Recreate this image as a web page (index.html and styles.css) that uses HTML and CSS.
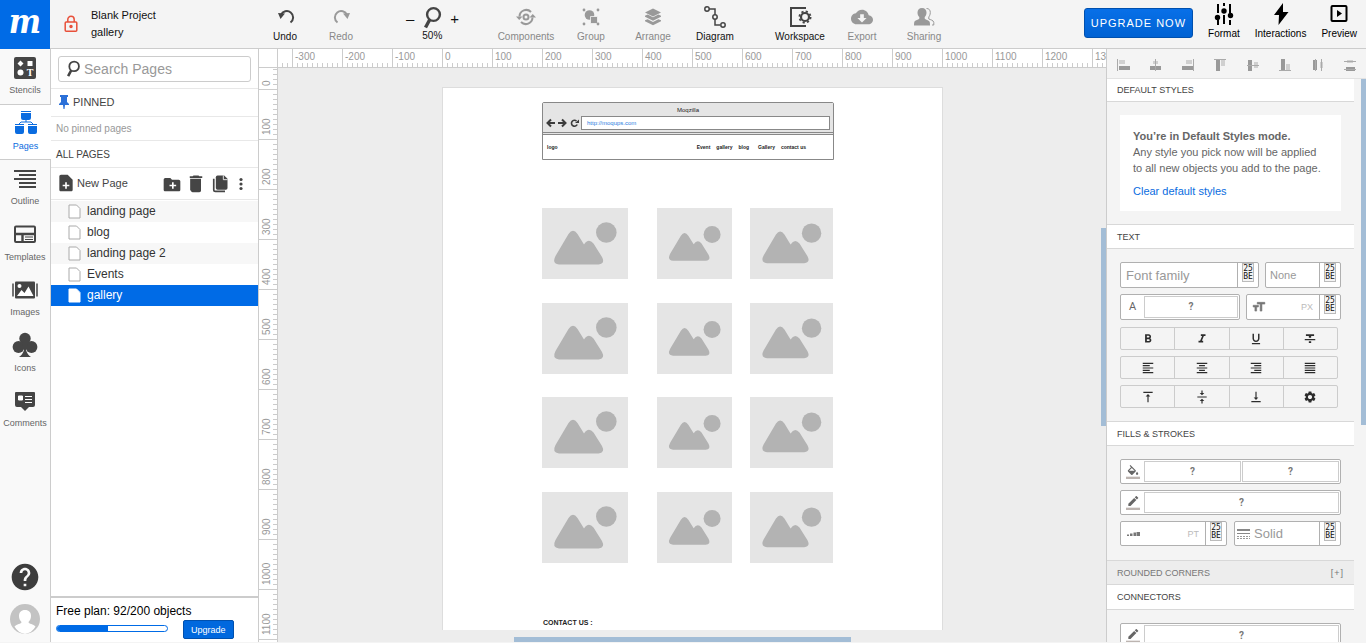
FILE: index.html
```html
<!DOCTYPE html>
<html lang="en">
<head>
<meta charset="utf-8">
<title>Blank Project - gallery</title>
<link rel="stylesheet" href="styles.css">
</head>
<body>
<svg class="defs" width="0" height="0" aria-hidden="true">
  <symbol id="picture" viewBox="0 0 86 71">
    <path d="M17 56.500Q9.500 55.500 13.500 48L26.500 26Q31 19.500 35.500 26L42 36.500Q46.500 29.500 51.500 35.500L60 49Q63.500 55.500 56.500 56.500Z"/>
    <circle cx="64.300" cy="24.500" r="10.300"/>
  </symbol>
  <symbol id="sheet" viewBox="0 0 13 15"><path d="M1 1h7.500l3.500 3.500v9.500H1z"/></symbol>
  <symbol id="lens" viewBox="0 0 20 24"><g fill="none" stroke="currentColor"><circle cx="11.500" cy="8.500" r="6.400" stroke-width="2.400"/><path d="M7.800 13.500L3.500 21.500" stroke-width="3.400"/></g></symbol>
  <symbol id="pencil" viewBox="0 0 24 24"><path d="M17.750 7L14 3.250l-10 10V17h3.750l10-10zm2.960-2.960c.39-.39.39-1.020 0-1.410L18.370.29c-.39-.39-1.020-.39-1.410 0L15 2.250 18.750 6l1.960-1.960z"/><path d="M0 20h24v4H0z" fill="#bcb4b0"/></symbol>
</svg>

<header class="topbar">
  <a class="logo" href="#" aria-label="Home">m</a>
  <div class="project">
    <svg width="14" height="18" viewBox="0 0 14 18" fill="none" stroke="#e8503a" stroke-width="1.500"><rect x="1.200" y="7" width="11.600" height="9.200" rx="1"/><path d="M3.800 7V4.500A3.200 3.200 0 0 1 10.200 4.500V7"/><circle cx="7" cy="11.600" r="1" fill="#e8503a"/></svg>
    <div class="names"><span>Blank Project</span><span>gallery</span></div>
  </div>
  <div class="tools history">
    <button class="tool"><svg width="20" height="20" viewBox="0 0 20 20"><path d="M6 8A6.300 6.300 0 1 1 15.500 15.500" fill="none" stroke="currentColor" stroke-width="2"/><path d="M3 6l7 .5-4.500 5.500z" fill="currentColor"/></svg>Undo</button>
    <button class="tool off"><svg width="20" height="20" viewBox="0 0 20 20"><path d="M16 8A6.300 6.300 0 1 0 6.500 15.500" fill="none" stroke="currentColor" stroke-width="2"/><path d="M19 6l-7 .5 4.500 5.500z" fill="currentColor"/></svg>Redo</button>
  </div>
  <div class="zoom">
    <button aria-label="Zoom out">–</button>
    <button class="level"><svg width="20" height="24"><use href="#lens"/></svg>50%</button>
    <button aria-label="Zoom in">+</button>
  </div>
  <div class="tools">
    <button class="tool off wide"><svg width="20" height="20" viewBox="0 0 20 20"><g fill="none" stroke="currentColor" stroke-width="2"><path d="M3.500 9.500A6.700 6.700 0 0 1 15 5M16.500 10.500A6.700 6.700 0 0 1 5 15"/><circle cx="10" cy="10" r="2.500"/></g><path d="M0 9.500h6.500L3.200 13zM20 10.500h-6.500L16.800 7z" fill="currentColor"/></svg>Components</button>
    <button class="tool off"><svg width="20" height="20" viewBox="0 0 20 20" fill="currentColor"><circle cx="8.500" cy="8" r="4.800"/><path d="M9.500 9.500h7v7h-7z" stroke="#f4f4f4" stroke-width=".8"/><circle cx="3" cy="3" r="1.400"/><circle cx="17" cy="3" r="1.400"/><circle cx="3" cy="17" r="1.400"/><circle cx="17" cy="17" r="1.400"/></svg>Group</button>
    <button class="tool off"><svg width="20" height="20" viewBox="0 0 20 20" fill="currentColor"><path d="M10 1.500l8 4-8 4-8-4zM2 8.800l2.600-1.300L10 10.200l5.400-2.700L18 8.800v1l-8 4-8-4zM2 13.300l2.600-1.100L10 14.900l5.400-2.700 2.600 1.100v1l-8 4-8-4z"/></svg>Arrange</button>
    <button class="tool"><svg width="24" height="24" viewBox="0 0 24 24" fill="#f4f4f4" stroke="currentColor" stroke-width="1.500"><path d="M6 4h6v16h5" fill="none"/><circle cx="4" cy="4" r="2.200"/><circle cx="12" cy="12" r="2.200"/><circle cx="20" cy="20" r="2.200"/></svg>Diagram</button>
  </div>
  <div class="tools workspace">
    <button class="tool"><svg width="24" height="22" viewBox="0 0 24 22" fill="none" stroke="currentColor"><path d="M18 2H3v18h15" stroke-width="2"/><circle cx="17" cy="11" r="4" stroke-width="2.200"/><circle cx="17" cy="11" r="5.600" stroke-width="1.800" stroke-dasharray="2.200 2.198"/></svg>Workspace</button>
    <button class="tool off"><svg width="22" height="20" viewBox="0 2 24 20" fill="currentColor"><path d="M19.350 10.040C18.670 6.590 15.640 4 12 4 9.110 4 6.600 5.640 5.350 8.040 2.340 8.360 0 10.910 0 14c0 3.310 2.690 6 6 6h13c2.760 0 5-2.240 5-5 0-2.640-2.050-4.780-4.650-4.960zM17 13l-5 5-5-5h3V9h4v4h3z"/></svg>Export</button>
    <button class="tool off"><svg width="22" height="20" viewBox="0 0 22 20"><path d="M9 1c2.800 0 4.500 1.800 4.500 4.500 0 2-.8 3.500-1.800 4.500v1.500c0 1 4.300 1.500 5 3.500.3 1 .3 3 .3 3.500H1c0-.5 0-2.500.3-3.500.700-2 5-2.500 5-3.500V10c-1-1-1.800-2.500-1.800-4.500C4.500 2.800 6.200 1 9 1z" fill="currentColor"/><path d="M13.500 1.500c2.500 0 3.800 1.500 3.800 4s-1 3.500-1.500 4.500V12c1.500.8 4.700 1 5 3.500V18H19" fill="none" stroke="currentColor"/></svg>Sharing</button>
  </div>
  <div class="actions">
    <button class="upgrade-now">UPGRADE NOW</button>
    <button class="action"><svg width="20" height="22" viewBox="0 0 20 22"><path d="M4 1v9M4 17v5M10 0v3M10 12v9M16 1v9M16 17v5" stroke="#000" stroke-width="2" stroke-dasharray="9 2"/><circle cx="3.500" cy="14.500" r="2.700"/><circle cx="10" cy="8" r="2.700"/><circle cx="16.500" cy="12.500" r="2.700"/></svg>Format</button>
    <button class="action"><svg width="20" height="22" viewBox="0 0 20 22"><path d="M12 0L3 12h5L7.500 22 17.500 9H12z"/></svg>Interactions</button>
    <button class="action"><svg width="20" height="22" viewBox="0 0 20 22"><rect x="2.500" y="3" width="15" height="15" rx="1" fill="none" stroke="#000" stroke-width="2"/><path d="M8 7l5 3.500L8 14z"/></svg>Preview</button>
  </div>
</header>

<main class="work">
  <nav class="rail">
    <a class="tab" href="#"><svg width="22" height="22" viewBox="0 0 22 22"><rect width="22" height="22" rx="2" fill="#454545"/><path d="M6.500 3.500L9.500 6.500 6.500 9.500 3.500 6.500zM13.500 4h5v5h-5z" fill="#fff"/><circle cx="6.500" cy="15.500" r="3" fill="#fff"/><text x="16" y="19" text-anchor="middle" fill="#fff" font-family="Liberation Serif" font-weight="bold" font-size="10">T</text></svg>Stencils</a>
    <a class="tab current" href="#"><svg width="24" height="26" viewBox="0 0 24 26" fill="currentColor"><path d="M7 1h10v1H7zM7 3h10v5q0 2-2 2H9q-2 0-2-2zM1 14h9v1H1zM1 16h9v6q0 2-2 2H3q-2 0-2-2zM14 14h9v1h-9zM14 16h9v6q0 2-2 2h-5q-2 0-2-2z"/><path d="M12 10v2M5 14l2-2h10l2 2" fill="none" stroke="currentColor"/></svg>Pages</a>
    <a class="tab" href="#"><svg width="22" height="22" viewBox="0 0 22 22"><path d="M0 3h22M5 7h17M0 11h22M5 15h17M5 19h17" stroke="#454545" stroke-width="2"/></svg>Outline</a>
    <a class="tab" href="#"><svg width="22" height="22" viewBox="0 0 22 22"><rect x="1" y="3.500" width="20" height="15.500" rx="1" fill="none" stroke="#454545" stroke-width="2"/><path d="M1 11h20M8.500 11v8" stroke="#454545" stroke-width="2.400"/><path d="M11 14h8M11 16.500h8" stroke="#454545"/></svg>Templates</a>
    <a class="tab" href="#"><svg width="26" height="22" viewBox="0 0 26 22"><path d="M1 4.500v13M25 4.500v13" stroke="#454545" stroke-width="1.500"/><rect x="3" y="2.500" width="20" height="17" rx="1" fill="#454545"/><path d="M5 17l4.500-6 3 3 4-6.500 5 9.500z" fill="#fff"/><circle cx="7.500" cy="7" r="2" fill="#fff"/></svg>Images</a>
    <a class="tab" href="#"><svg width="26" height="26" viewBox="0 0 26 26" fill="#454545"><circle cx="13" cy="6.500" r="5.700"/><circle cx="6.500" cy="15" r="5.900"/><circle cx="19.500" cy="15" r="5.900"/><path d="M11 10h4l1 5-2 3q1.500 5 5 7H7q3.500-2 5-7l-2-3z"/></svg>Icons</a>
    <a class="tab" href="#"><svg width="22" height="22" viewBox="0 0 22 22"><path d="M2 2h18q1 0 1 1v12q0 2-2 2h-4l-4 4-4-4H3q-2 0-2-2V3q0-1 1-1z" fill="#454545"/><path d="M4.500 6h4v4h-4zM11 6.500h7M11 9.500h7M11 12.500h7" fill="#fff" stroke="#fff"/></svg>Comments</a>
    <div class="account">
      <button aria-label="Help"><svg width="32" height="32" viewBox="0 0 24 24" fill="#3d3d3d"><path d="M12 2C6.480 2 2 6.480 2 12s4.480 10 10 10 10-4.480 10-10S17.520 2 12 2zm1 17h-2v-2h2v2zm2.070-7.750l-.9.920C13.450 12.900 13 13.500 13 15h-2v-.5c0-1.100.45-2.100 1.170-2.830l1.240-1.260c.37-.36.59-.86.59-1.410 0-1.100-.9-2-2-2s-2 .9-2 2H8c0-2.210 1.790-4 4-4s4 1.790 4 4c0 .88-.36 1.680-.93 2.250z"/></svg></button>
      <button aria-label="Account"><svg width="30" height="30" viewBox="0 0 30 30"><circle cx="15" cy="15" r="15" fill="#c3c3c3"/><path d="M15 6c4 0 6 2.500 6 6 0 2.500-1 4.500-2.500 6 0 2 5 2 7 4.500A14.500 14.500 0 0 1 15 30 14.500 14.500 0 0 1 4.500 22.500C6.500 20 11.500 20 11.500 18 10 16.500 9 14.500 9 12c0-3.500 2-6 6-6z" fill="#fff"/></svg></button>
    </div>
  </nav>

  <aside class="pages">
    <label class="search"><svg width="16" height="18"><use href="#lens"/></svg><input type="text" placeholder="Search Pages" aria-label="Search Pages"></label>
    <h2 class="row pinned"><svg width="10" height="14" viewBox="0 0 10 14" fill="#2b70d8"><path d="M1 0h8v2H8v5l2 2v1H6L5.500 14h-1L4 10H0V9l2-2V2H1z"/></svg>PINNED</h2>
    <p class="row none">No pinned pages</p>
    <h2 class="row all">ALL PAGES</h2>
    <div class="row new">
      <button class="add"><svg width="20" height="20" viewBox="0 0 24 24"><path d="M14 2H6c-1.100 0-1.990.9-1.990 2L4 20c0 1.100.89 2 1.990 2H18c1.100 0 2-.9 2-2V8l-6-6zm2 14h-3v3h-2v-3H8v-2h3v-3h2v3h3v2z"/></svg>New Page</button>
      <button aria-label="New folder"><svg width="20" height="20" viewBox="0 0 24 24"><path d="M20 8h-8l-2-2H4c-1.110 0-2 .89-2 2v12c0 1.110.89 2 2 2h16c1.110 0 2-.89 2-2V10c0-1.110-.89-2-2-2zm-3 8h-3v3h-2v-3H9v-2h3v-3h2v3h3v2z"/></svg></button>
      <button aria-label="Delete"><svg width="20" height="20" viewBox="0 0 24 24"><path d="M6 21c0 1.100.9 2 2 2h8c1.100 0 2-.9 2-2V7H5v14zM19.500 4H16l-1-1H9L8 4H4.500v2h15z"/></svg></button>
      <button aria-label="Duplicate"><svg width="20" height="20" viewBox="0 0 24 24"><path d="M9 3h8l4 4v11q0 2-2 2H9q-2 0-2-2V5q0-2 2-2z"/><path d="M4.500 7v13q0 2 2 2H18" fill="none" stroke="#454545" stroke-width="2"/><path d="M16 3v5h5" fill="none" stroke="#fff"/></svg></button>
      <button class="more" aria-label="More"><svg width="10" height="20" viewBox="0 0 10 20"><circle cx="5" cy="6.500" r="1.600"/><circle cx="5" cy="11" r="1.600"/><circle cx="5" cy="15.500" r="1.600"/></svg></button>
    </div>
    <ul class="list">
      <li><a href="#"><svg width="13" height="15"><use href="#sheet"/></svg>landing page</a></li>
      <li><a href="#"><svg width="13" height="15"><use href="#sheet"/></svg>blog</a></li>
      <li><a href="#"><svg width="13" height="15"><use href="#sheet"/></svg>landing page 2</a></li>
      <li><a href="#"><svg width="13" height="15"><use href="#sheet"/></svg>Events</a></li>
      <li class="selected"><a href="#"><svg width="13" height="15"><use href="#sheet"/></svg>gallery</a></li>
    </ul>
    <footer class="plan">
      <span>Free plan: 92/200 objects</span>
      <div class="quota"><div class="bar"><div class="used" style="width:46%"></div></div><button class="upgrade">Upgrade</button></div>
    </footer>
  </aside>

  <section class="editor">
    <div class="corner"></div>
    <div class="ruler-h"><span>-300</span><span>-200</span><span>-100</span><span>0</span><span>100</span><span>200</span><span>300</span><span>400</span><span>500</span><span>600</span><span>700</span><span>800</span><span>900</span><span>1000</span><span>1100</span><span>1200</span><span>1300</span></div>
    <div class="ruler-v"><span>0</span><span>100</span><span>200</span><span>300</span><span>400</span><span>500</span><span>600</span><span>700</span><span>800</span><span>900</span><span>1000</span><span>1100</span></div>
    <div class="viewport">
      <div class="stage">
        <div class="page">
          <div class="browser">
            <div class="chrome">
              <div class="title">Moqzilla</div>
              <div class="address">
                <svg width="34" height="10" viewBox="0 0 34 10" fill="none" stroke="#3c3c3c" stroke-width="2"><path d="M9 5H2M5 1.500L1.500 5 5 8.500M12 5h7M16 1.500L19.500 5 16 8.500"/><path d="M31.200 6.500A3 3 0 1 1 30.500 3" stroke-width="1.600"/><path d="M29 5h4V1.500z" fill="#3c3c3c" stroke="none"/></svg>
                <span class="url">http://moqups.com</span>
              </div>
            </div>
            <div class="site"><b class="brand">logo</b><b>Event</b><b>gallery</b><b>blog</b><b class="far">Gallery</b><b>contact us</b></div>
          </div>
          <div class="gallery">
            <div class="tile"><svg><use href="#picture"/></svg></div><div class="tile small"><svg><use href="#picture"/></svg></div><div class="tile medium"><svg><use href="#picture"/></svg></div>
            <div class="tile"><svg><use href="#picture"/></svg></div><div class="tile small"><svg><use href="#picture"/></svg></div><div class="tile medium"><svg><use href="#picture"/></svg></div>
            <div class="tile"><svg><use href="#picture"/></svg></div><div class="tile small"><svg><use href="#picture"/></svg></div><div class="tile medium"><svg><use href="#picture"/></svg></div>
            <div class="tile"><svg><use href="#picture"/></svg></div><div class="tile small"><svg><use href="#picture"/></svg></div><div class="tile medium"><svg><use href="#picture"/></svg></div>
          </div>
          <div class="contact">CONTACT US :</div>
        </div>
      </div>
      <div class="scroll-v"></div>
      <div class="scroll-h"></div>
    </div>
  </section>

  <aside class="format">
    <div class="align">
      <button aria-label="Align left"><svg viewBox="0 0 14 14"><path class="lt" d="M3 2h6v4H3z"/><path d="M3 8h11v4H3z"/><path d="M1.500 1v12" stroke="#aaa"/></svg></button>
      <button aria-label="Align centre"><svg viewBox="0 0 14 14"><path class="lt" d="M5 3h5v3H5z"/><path d="M2 8h11v4H2z"/><path d="M7.500 1v12" stroke="#aaa"/></svg></button>
      <button aria-label="Align right"><svg viewBox="0 0 14 14"><path class="lt" d="M5 2h6v4H5z"/><path d="M1 8h11v4H1z"/><path d="M12.500 1v12" stroke="#aaa"/></svg></button>
      <button aria-label="Align top"><svg viewBox="0 0 14 14"><path class="lt" d="M8 2h4v6H8z"/><path d="M3 2h4v11H3z"/><path d="M1 1.500h12" stroke="#aaa"/></svg></button>
      <button aria-label="Align middle"><svg viewBox="0 0 14 14"><path class="lt" d="M8 4h4v6H8z"/><path d="M2 2h4v11H2z"/><path d="M1 7.500h12" stroke="#aaa"/></svg></button>
      <button aria-label="Align bottom"><svg viewBox="0 0 14 14"><path class="lt" d="M8 6h4v6H8z"/><path d="M3 1h4v11H3z"/><path d="M1 12.500h12" stroke="#aaa"/></svg></button>
      <button aria-label="Distribute horizontally"><svg viewBox="0 0 14 14"><path class="lt" d="M9 4h3v6H9z"/><path d="M2 2h4v10H2z"/><path d="M4.500 1v12M10.500 1v12" stroke="#aaa"/></svg></button>
      <button aria-label="Distribute vertically"><svg viewBox="0 0 14 14"><path class="lt" d="M4 2h6v3H4z"/><path d="M3 9h9v4H3z"/><path d="M1 3.500h12M1 11.500h12" stroke="#aaa"/></svg></button>
    </div>
    <div class="scroller">
      <div class="sections">
        <h3 class="first">DEFAULT STYLES</h3>
        <div class="block">
          <div class="card"><p><b>You’re in Default Styles mode.</b><br>Any style you pick now will be applied<br>to all new objects you add to the page.</p><a href="#">Clear default styles</a></div>
        </div>
        <h3 class="text">TEXT</h3>
        <div class="block fields type">
          <div class="line">
            <div class="field grow"><input type="text" placeholder="Font family" aria-label="Font family"><button class="drop" aria-label="Fonts"><i>25<br>BE</i></button></div>
            <div class="field weight"><input class="sm" type="text" placeholder="None" aria-label="Font weight"><button class="drop" aria-label="Weights"><i>25<br>BE</i></button></div>
          </div>
          <div class="line">
            <div class="field color"><span class="ico letter">A</span><button class="swatch">?</button></div>
            <div class="field grow"><span class="ico"><svg width="14" height="14" viewBox="0 0 24 24" fill="#777"><path d="M9 4v3h5v12h3V7h5V4H9zm-7 8h3v7h3v-7h3V9H2v3z" stroke="#777"/></svg></span><input class="unit" type="text" placeholder="PX" aria-label="Font size"><button class="drop" aria-label="Sizes"><i>25<br>BE</i></button></div>
          </div>
          <div class="segs">
          <div class="seg">
            <button aria-label="Bold"><svg viewBox="0 0 24 24"><path d="M15.600 10.790c.97-.67 1.650-1.770 1.650-2.790 0-2.260-1.750-4-4-4H7v14h7.040c2.090 0 3.710-1.700 3.710-3.790 0-1.520-.86-2.820-2.150-3.420zM10 6.500h3c.83 0 1.500.67 1.500 1.500s-.67 1.500-1.500 1.500h-3v-3zm3.500 9H10v-3h3.500c.83 0 1.500.67 1.500 1.500s-.67 1.500-1.500 1.500z"/></svg></button>
            <button aria-label="Italic"><svg viewBox="0 0 24 24"><path d="M10 4v3h2.210l-3.420 8H6v3h8v-3h-2.210l3.420-8H18V4z"/></svg></button>
            <button aria-label="Underline"><svg viewBox="0 0 24 24"><path d="M12 17c3.310 0 6-2.690 6-6V3h-2.500v8c0 1.930-1.570 3.500-3.500 3.500S8.500 12.930 8.500 11V3H6v8c0 3.310 2.690 6 6 6zm-7 2v2h14v-2H5z"/></svg></button>
            <button aria-label="Strikethrough"><svg viewBox="0 0 24 24"><path d="M10 19h4v-3h-4v3zM5 4v3h5v3h4V7h5V4H5zM3 14h18v-2H3v2z"/></svg></button>
          </div>
          <div class="seg">
            <button aria-label="Text left"><svg viewBox="0 0 24 24"><path d="M3 3h18v2H3zM3 7h12v2H3zM3 11h18v2H3zM3 15h12v2H3zM3 19h18v2H3z"/></svg></button>
            <button aria-label="Text centre"><svg viewBox="0 0 24 24"><path d="M3 3h18v2H3zM7 7h10v2H7zM3 11h18v2H3zM7 15h10v2H7zM3 19h18v2H3z"/></svg></button>
            <button aria-label="Text right"><svg viewBox="0 0 24 24"><path d="M3 3h18v2H3zM9 7h12v2H9zM3 11h18v2H3zM9 15h12v2H9zM3 19h18v2H3z"/></svg></button>
            <button aria-label="Justify"><svg viewBox="0 0 24 24"><path d="M3 3h18v2H3zM3 7h18v2H3zM3 11h18v2H3zM3 15h18v2H3zM3 19h18v2H3z"/></svg></button>
          </div>
          <div class="seg">
            <button aria-label="Top"><svg viewBox="0 0 24 24"><path d="M8 11h3v10h2V11h3l-4-4-4 4zM4 3v2h16V3H4z"/></svg></button>
            <button aria-label="Middle"><svg viewBox="0 0 24 24"><path d="M8 19h3v4h2v-4h3l-4-4-4 4zm8-14h-3V1h-2v4H8l4 4 4-4zM4 11v2h16v-2H4z"/></svg></button>
            <button aria-label="Bottom"><svg viewBox="0 0 24 24"><path d="M16 13h-3V3h-2v10H8l4 4 4-4zM4 19v2h16v-2H4z"/></svg></button>
            <button aria-label="Text settings"><svg viewBox="0 0 24 24"><path d="M19.140 12.940c.04-.3.06-.61.06-.94 0-.32-.02-.64-.07-.94l2.030-1.580c.18-.14.23-.41.12-.61l-1.920-3.320c-.12-.22-.37-.29-.59-.22l-2.390.96c-.5-.38-1.030-.7-1.620-.94l-.36-2.540c-.04-.24-.24-.41-.48-.41h-3.840c-.24 0-.43.17-.47.41l-.36 2.540c-.59.24-1.130.57-1.620.94l-2.390-.96c-.22-.08-.47 0-.59.22L2.740 8.870c-.12.21-.08.47.12.61l2.030 1.580c-.05.3-.09.63-.09.94s.02.64.07.94l-2.030 1.580c-.18.14-.23.41-.12.61l1.920 3.320c.12.22.37.29.59.22l2.390-.96c.5.38 1.030.7 1.620.94l.36 2.540c.05.24.24.41.48.41h3.840c.24 0 .44-.17.47-.41l.36-2.540c.59-.24 1.130-.56 1.620-.94l2.390.96c.22.08.47 0 .59-.22l1.920-3.320c.12-.22.07-.47-.12-.61l-2.010-1.580zM12 15.600c-1.980 0-3.600-1.620-3.600-3.600s1.620-3.600 3.600-3.600 3.600 1.620 3.600 3.600-1.620 3.600-3.600 3.600z"/></svg></button>
          </div>
          </div>
        </div>
        <h3 class="text">FILLS &amp; STROKES</h3>
        <div class="block fields paint">
          <div class="field"><span class="ico"><svg width="14" height="14" viewBox="0 0 24 24" fill="#666"><path d="M16.560 8.940L7.620 0 6.210 1.410l2.380 2.380-5.150 5.150c-.59.59-.59 1.540 0 2.120l5.500 5.500c.29.29.68.44 1.060.44s.77-.15 1.060-.44l5.500-5.500c.59-.58.59-1.530 0-2.120zM5.210 10L10 5.210 14.790 10H5.210zM19 11.500s-2 2.170-2 3.500c0 1.100.9 2 2 2s2-.9 2-2c0-1.330-2-3.500-2-3.500z"/><path d="M0 20h24v4H0z" fill="#bcb4b0"/></svg></span><button class="swatch">?</button><button class="swatch">?</button></div>
          <div class="field"><span class="ico"><svg width="14" height="14" fill="#666"><use href="#pencil"/></svg></span><button class="swatch">?</button></div>
          <div class="line">
            <div class="field half"><span class="ico"><svg width="14" height="6" viewBox="0 0 14 6" fill="#777"><path d="M1 3.500h2v1.500H1zM4 2.500h2.500V5H4zM7.500 1.500H10V5H7.500zM10.500 1H14v4h-3.500z"/></svg></span><input class="unit" type="text" placeholder="PT" aria-label="Stroke width"><button class="drop" aria-label="Widths"><i>25<br>BE</i></button></div>
            <div class="field half"><span class="ico tight"><svg width="13" height="10" viewBox="0 0 13 10" fill="#888"><path d="M0 0h13v2H0zM0 4h13v1H0z"/><path d="M0 7.500h13M0 9.500h13" stroke="#999" stroke-dasharray="2 1"/></svg></span><input type="text" placeholder="Solid" aria-label="Stroke style"><button class="drop" aria-label="Styles"><i>25<br>BE</i></button></div>
          </div>
        </div>
        <h3 class="text closed">ROUNDED CORNERS<span>[+]</span></h3>
        <h3>CONNECTORS</h3>
        <div class="block fields paint">
          <div class="field"><span class="ico"><svg width="14" height="14" fill="#666"><use href="#pencil"/></svg></span><button class="swatch">?</button></div>
        </div>
      </div>
      <div class="scroll-f"></div>
    </div>
  </aside>
</main>
</body>
</html>
```
FILE: styles.css
```css
* { box-sizing: border-box; }
body {
  margin: 0;
  height: 100vh;
  padding-bottom: 1px;
  display: flex;
  flex-direction: column;
  overflow: hidden;
  background: #f4f4f4;
  font-family: "Liberation Sans", Arial, sans-serif;
  font-size: 11px;
  color: #333;
}
button { border: 0; padding: 0; background: none; font: inherit; color: inherit; }
input { border: 0; padding: 0; background: none; font: inherit; color: inherit; outline: 0; min-width: 0; }
h2, h3, p, ul { margin: 0; padding: 0; font-weight: normal; list-style: none; }
a { color: inherit; text-decoration: none; }
svg { display: block; flex: none; }
.defs { position: absolute; }

/* Top bar */
.topbar { display: flex; flex: none; height: 49px; border-bottom: 1px solid #ccc; background: #f4f4f4; color: #111; }
.logo {
  width: 50px; height: 49px; flex: none; background: #006be6; color: #fff; text-align: center;
  font: italic bold 34px/43px "DejaVu Serif Condensed", "DejaVu Serif", serif;
}
.project { display: flex; align-items: center; gap: 13px; width: 207px; padding-left: 14px; }
.names { display: flex; flex-direction: column; line-height: 17px; }
.tools { display: flex; }
.workspace { margin-left: 23px; }
.tool { display: flex; flex-direction: column; justify-content: flex-end; align-items: center; width: 62px; height: 43px; padding-top: 3px; font-size: 10px; line-height: 13px; color: #111; }
.tool svg { margin: auto; color: #444; }
.history .tool { width: 56px; }
.tool.wide { width: 68px; }
.tool.off { color: #888; }
.tool.off svg { color: #999; }
.zoom { display: flex; align-items: center; justify-content: center; gap: 4px; width: 123px; padding: 0 0 12px 4px; font-size: 15px; }
.level { display: flex; flex-direction: column; align-items: center; width: 28px; padding-top: 12px; font-size: 10px; line-height: 12px; }
.level svg, .search svg { color: #444; }
.actions { display: flex; align-items: flex-start; gap: 15px; margin-left: auto; padding-right: 9px; }
.action { display: flex; flex-direction: column; align-items: center; gap: 2px; padding-top: 3px; font-size: 10px; line-height: 13px; color: #000; }
.upgrade-now { height: 30px; margin-top: 8px; padding: 0 6px; border: 1px solid #0050ae; border-radius: 3px; background: linear-gradient(#0870e8, #0062d3); color: #fff; letter-spacing: 1px; }

.work { display: flex; flex: 1; min-height: 0; }

/* Left rail */
.rail { display: flex; flex-direction: column; flex: none; width: 51px; border-right: 1px solid #ccc; background: #f9f9f9; }
.tab { display: flex; flex-direction: column; align-items: center; height: 55px; padding: 2px 0 8px; font-size: 9px; line-height: 12px; color: #666; }
.tab:nth-child(even) { height: 56px; }
.tab svg { margin: auto; }
.tab.current { margin-right: -1px; background: #fff; color: #0a6ce0; box-shadow: 0 1px #ccc inset, 0 -1px #ccc inset; }
.account { display: flex; flex-direction: column; align-items: center; gap: 11px; margin-top: auto; padding-bottom: 8px; }

/* Pages panel */
.pages { display: flex; flex-direction: column; flex: none; width: 208px; border-right: 1px solid #ccc; background: #fff; }
.search { display: flex; align-items: center; gap: 3px; margin: 7px 7px 6px; height: 26px; padding-left: 6px; border: 1px solid #ccc; border-radius: 3px; font-size: 14px; }
.search input { flex: 1; }
::placeholder { color: #999; opacity: 1; }
.row { display: flex; align-items: center; border-top: 1px solid #e8e8e8; font-size: 11px; }
.row.pinned { height: 28px; padding: 0 0 2px 8px; gap: 4px; color: #444; }
.row.none { height: 24px; padding-left: 5px; font-size: 10px; color: #999; }
.row.all { height: 27px; padding-left: 5px; font-size: 10px; color: #444; }
.row.new { height: 33px; gap: 4px; padding: 0 12px 1px 5px; border-bottom: 1px solid #e8e8e8; fill: #454545; color: #444; }
.add { display: flex; align-items: center; gap: 1px; margin-right: auto; }
.more { margin-left: 2px; }
.list { flex: 1; padding-top: 1px; }
.list a { display: flex; align-items: center; gap: 6px; height: 21px; padding: 0 0 1px 17px; font-size: 12px; }
.list svg { fill: #fff; stroke: #aaa; }
.list li:nth-child(odd) { background: #f7f7f7; }
.list li.selected { background: #006be6; color: #fff; }
.list .selected svg { stroke: #fff; }
.plan { padding: 6px 5px 3px; border-top: 2px solid #ccc; font-size: 12px; line-height: 14px; color: #000; }
.quota { display: flex; gap: 15px; }
.bar { width: 112px; height: 7px; margin-top: 7px; border: 1px solid #006be6; border-radius: 4px; overflow: hidden; }
.used { height: 100%; background: #006be6; }
.upgrade { height: 19px; margin-top: 2px; padding: 0 7px; border: 1px solid #0050ae; border-radius: 2px; background: #0068de; color: #fff; font-size: 9px; }

/* Canvas with rulers */
.editor { display: grid; grid-template: 19px minmax(0, 1fr) / 19px minmax(0, 1fr); flex: 1; min-width: 0; color: #999; font-size: 10px; }
.corner, .ruler-h, .ruler-v { background: #fff; border: 0 solid #ccc; overflow: hidden; }
.corner { border-width: 0 1px 1px 0; }
.ruler-h {
  display: flex; padding-left: 14px; border-bottom-width: 1px;
  background: repeating-linear-gradient(90deg, transparent 0 4px, #ccc 4px 5px) 0 100% / 100% 4px no-repeat #fff;
}
.ruler-h span { flex: none; width: 50px; padding-left: 2px; border-left: 1px solid #ccc; line-height: 15px; }
.ruler-v {
  display: flex; flex-direction: column; border-right-width: 1px;
  background: repeating-linear-gradient(transparent 0 1px, #ccc 1px 2px, transparent 2px 5px) 100% 0 / 4px 100% no-repeat #fff;
}
.ruler-v span { flex: none; width: 18px; height: 50px; padding: 4px 1px 0 0; border-top: 1px solid #ccc; writing-mode: vertical-rl; transform: rotate(180deg); line-height: 14px; }
.ruler-v span:first-child { height: 22px; padding-top: 3px; }
.viewport { position: relative; display: flex; padding: 0 10px 12px 0; background: #ededed; overflow: hidden; }
.stage { flex: 1; overflow: hidden; padding: 19px 0 0 164px; }
.page { width: 501px; height: 1000px; padding: 14px 0 0 99px; background: #fff; border: 1px solid #ddd; color: #222; }
.browser { width: 292px; border: 1px solid #888; border-radius: 2px 2px 0 0; }
.chrome { height: 32px; padding: 3px; background: #e5e5e5; border-bottom: 3px double #888; color: #222; font-size: 6px; line-height: 8px; }
.title { text-align: center; }
.address { display: flex; align-items: center; gap: 1px; padding-top: 2px; }
.url { flex: 1; height: 14px; padding-left: 5px; border: 1px solid #888; background: #fff; line-height: 12px; color: #2a7de0; }
.site { display: flex; align-items: center; gap: 6px; height: 24px; padding: 0 27px 0 4px; font-size: 5px; }
.brand { margin-right: auto; }
.far { margin-left: 3px; }
.gallery { display: grid; grid-template: 95px 94px 95px 71px / 115px 93px 83px; margin-top: 48px; }
.tile { display: flex; align-items: center; justify-content: center; width: 86px; height: 71px; background: #e5e5e5; fill: #b3b3b3; }
.tile svg { width: 86px; height: 71px; }
.tile.small { width: 75px; }
.tile.small svg { width: 71px; }
.tile.medium { width: 83px; }
.tile.medium svg { width: 81px; }
.contact { margin-top: 55px; padding-left: 1px; font-weight: bold; font-size: 7px; line-height: 10px; }
.scroll-v { position: absolute; right: 0; top: 160px; width: 5px; height: 198px; background: #a3bdd6; }
.scroll-h { position: absolute; left: 236px; bottom: 0; width: 337px; height: 5px; background: #a3bdd6; }

/* Format panel */
.format { display: flex; flex-direction: column; flex: none; width: 260px; border-left: 1px solid #ccc; background: #f4f4f4; }
.align { display: flex; flex: none; justify-content: space-between; align-items: center; height: 30px; padding: 2px 9px 0; border-bottom: 1px solid #e2e2e2; }
.align svg { width: 14px; height: 14px; fill: #999; }
.align .lt { fill: #d0d0d0; }
.scroller { display: flex; justify-content: space-between; flex: 1; min-height: 0; overflow: hidden; }
.sections { flex: none; width: 247px; }
.scroll-f { width: 5px; height: 346px; background: #a3bdd6; }
h3 { display: flex; justify-content: space-between; height: 25px; padding: 0 10px; border-bottom: 1px solid #d8d8d8; background: #fff; font-size: 9px; line-height: 24px; color: #444; }
h3.first { height: 23px; line-height: 23px; }
h3.text { border-top: 1px solid #d8d8d8; }
h3.closed { background: #ededed; color: #777; }
h3.closed span { letter-spacing: 1px; }
.block { padding: 13px; }
.card { height: 96px; padding: 13px; background: #fff; line-height: 16px; color: #666; }
.card a { display: block; margin-top: 7px; color: #0a6ce0; }
.fields, .segs { display: flex; flex-direction: column; gap: 6px; }
.segs { padding-top: 1px; }
.line { display: flex; justify-content: space-between; gap: 6px; }
.field { display: flex; height: 26px; border: 1px solid #b0b0b0; border-radius: 2px; background: #fff; font-size: 13px; }
.paint .field { height: 25px; }
.paint { padding-bottom: 14px; }
.field input { flex: 1; width: 0; padding-left: 5px; }
.field.grow { flex: 1; }
.field.weight { width: 76px; }
.field.color { width: 120px; }
.field.half { width: 107px; }
.field .sm { font-size: 11px; padding-left: 4px; }
.field .unit { padding-right: 6px; font-size: 9px; text-align: right; }
.unit::placeholder { color: #bbb; }
.drop { display: flex; justify-content: center; width: 21px; border-left: 1px solid #b0b0b0; }
.drop i { height: 19px; width: 12px; padding-top: 1px; border: 1px solid #bbb; background: #f4f4f4; font: normal 8px/8px "DejaVu Sans Mono", monospace; color: #111; }
.ico { display: flex; flex: none; align-items: center; justify-content: center; width: 23px; }
.ico.tight { width: 17px; }
.ico.tight + input { padding-left: 2px; }
.letter { font: 11px/24px Roboto, sans-serif; color: #666; }
.swatch { flex: 1; margin: 1px 1px 1px 0; border: 1px solid #ccc; font: bold 10px/18px Roboto, sans-serif; color: #777; }
.seg { display: flex; width: 218px; height: 23px; border: 1px solid #ccc; border-radius: 2px; }
.seg button { display: flex; flex: 1; align-items: center; justify-content: center; }
.seg button + button { border-left: 1px solid #ccc; }
.seg svg { width: 14px; height: 14px; fill: #2c2c2c; }
```
